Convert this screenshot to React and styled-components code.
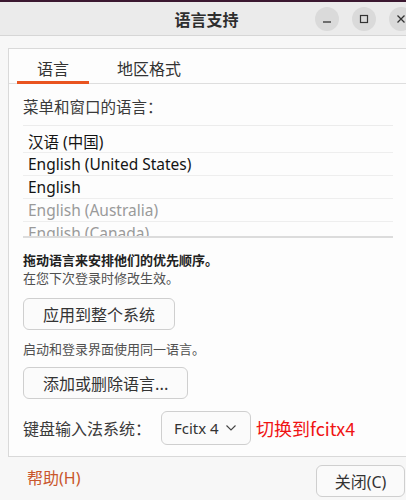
import React from "react";
import styled, { createGlobalStyle } from "styled-components";

const Global = createGlobalStyle`
  html, body { margin: 0; padding: 0; background: #f7f7f7; overflow: hidden; }
  body { font-family: "Noto Sans", "Noto Sans CJK SC", sans-serif; }
  * { box-sizing: border-box; }
`;

const Window = styled.div`
  width: 418px;
  height: 500px;
  display: flex;
  flex-direction: column;
  background: #f7f7f7;
  overflow: hidden;
`;

const TopStrip = styled.div`
  height: 2px;
  background: #3b1830;
`;

const TitleBar = styled.div`
  height: 34px;
  background: #ebebeb;
  border-bottom: 1px solid #d6d6d6;
  display: grid;
  grid-template-columns: 1fr auto 1fr;
  align-items: center;
  padding-right: 5px;
`;

const Title = styled.div`
  grid-column: 2;
  font-family: "Noto Sans CJK SC", sans-serif;
  font-weight: 700;
  font-size: 16px;
  color: #2e2e2e;
  padding-top: 1px;
`;

const Controls = styled.div`
  grid-column: 3;
  justify-self: end;
  display: flex;
  gap: 13px;
`;

const CtrlBtn = styled.div`
  width: 24px;
  height: 24px;
  border-radius: 50%;
  background: #dadada;
  display: flex;
  align-items: center;
  justify-content: center;
  color: #333;
`;

const Main = styled.div`
  padding: 12px 8px 0 8px;
`;

const Frame = styled.div`
  border: 1px solid #d9d9d9;
  background: #fdfdfd;
  height: 409px;
  display: flex;
  flex-direction: column;
`;

const TabBar = styled.div`
  height: 35px;
  border-bottom: 1px solid #dedede;
  display: flex;
  gap: 8px;
  padding-left: 8px;
`;

const Tab = styled.div`
  height: 35px;
  margin-bottom: -1px;
  padding: 5px 20px 0;
  display: flex;
  align-items: center;
  font-family: "Noto Sans CJK SC", sans-serif;
  font-size: 16px;
  color: #333;
  border-bottom: 3px solid ${(p) => (p.$active ? "#e95420" : "transparent")};
`;

const Panel = styled.div`
  padding: 12px 16px 0 14px;
  display: flex;
  flex-direction: column;
`;

const Label = styled.div`
  font-family: "Noto Sans CJK SC", sans-serif;
  font-size: ${(p) => p.$size || 15.5}px;
  line-height: 20px;
  color: #3a3a3a;
  white-space: nowrap;
`;

const List = styled.div`
  margin-top: 9px;
  height: 113px;
  border-top: 1px solid #ececec;
  border-bottom: 2px solid #dcdcdc;
  padding-top: 4px;
  overflow: hidden;
`;

const Row = styled.div`
  height: 23px;
  flex-shrink: 0;
  border-bottom: 1px solid #eeeeee;
  padding-left: 5px;
  display: flex;
  align-items: center;
  font-size: 15.5px;
  color: ${(p) => (p.$dim ? "#9a9a9a" : "#141414")};
  white-space: nowrap;
`;

const Note = styled.div`
  font-family: "Noto Sans CJK SC", sans-serif;
  font-size: 13px;
  line-height: 18px;
  color: ${(p) => (p.$bold ? "#222" : "#505050")};
  font-weight: ${(p) => (p.$bold ? 700 : 400)};
  margin-top: ${(p) => p.$mt || 0}px;
  white-space: nowrap;
`;

const Button = styled.div`
  align-self: flex-start;
  height: 32px;
  margin-top: ${(p) => p.$mt || 0}px;
  padding: 0 19px;
  border: 1px solid #cfcfcf;
  border-radius: 6px;
  background: #fbfbfb;
  display: flex;
  align-items: center;
  font-family: "Noto Sans CJK SC", sans-serif;
  font-size: 16px;
  color: #333;
  white-space: nowrap;
`;

const KbRow = styled.div`
  margin-top: 12px;
  display: flex;
  align-items: center;
`;

const Dropdown = styled.div`
  margin-left: 10px;
  width: 90px;
  height: 34px;
  border: 1px solid #cfcfcf;
  border-radius: 6px;
  background: #fbfbfb;
  display: flex;
  align-items: center;
  padding-left: 12px;
  gap: 7px;
  font-size: 15px;
  color: #333;
`;

const Annot = styled.div`
  margin-left: 5px;
  font-family: "Noto Sans CJK SC", sans-serif;
  font-size: 18px;
  color: #f01414;
  white-space: nowrap;
`;

const Footer = styled.div`
  padding: 8px 13px 0 27px;
  display: flex;
  justify-content: space-between;
  align-items: flex-start;
`;

const Help = styled.div`
  margin-top: 2px;
  line-height: 22px;
  font-family: "Noto Sans", "Noto Sans CJK SC", sans-serif;
  font-size: 16px;
  color: #c9562c;
`;

const CloseBtn = styled(Button)`
  width: 89px;
  justify-content: center;
  padding: 0;
  background: #fafafa;
  font-family: "Noto Sans", "Noto Sans CJK SC", sans-serif;
`;

export default function App() {
  return (
    <>
      <Global />
      <Window>
        <TopStrip />
        <TitleBar>
          <Title>语言支持</Title>
          <Controls>
            <CtrlBtn>
              <svg width="10" height="10" viewBox="0 0 10 10">
                <line x1="1" y1="8" x2="9" y2="8" stroke="#333" strokeWidth="1.3" />
              </svg>
            </CtrlBtn>
            <CtrlBtn>
              <svg width="10" height="10" viewBox="0 0 10 10">
                <rect x="1.5" y="1.5" width="7" height="7" fill="none" stroke="#333" strokeWidth="1.2" />
              </svg>
            </CtrlBtn>
            <CtrlBtn>
              <svg width="10" height="10" viewBox="0 0 10 10">
                <path d="M1.5 1.5 L8.5 8.5 M8.5 1.5 L1.5 8.5" stroke="#333" strokeWidth="1.3" />
              </svg>
            </CtrlBtn>
          </Controls>
        </TitleBar>
        <Main>
          <Frame>
            <TabBar>
              <Tab $active>语言</Tab>
              <Tab>地区格式</Tab>
            </TabBar>
            <Panel>
              <Label>菜单和窗口的语言：</Label>
              <List>
                <Row>汉语 (中国)</Row>
                <Row>English (United States)</Row>
                <Row>English</Row>
                <Row $dim>English (Australia)</Row>
                <Row $dim>English (Canada)</Row>
              </List>
              <Note $bold $mt={13}>拖动语言来安排他们的优先顺序。</Note>
              <Note>在您下次登录时修改生效。</Note>
              <Button $mt={11}>应用到整个系统</Button>
              <Note $mt={10}>启动和登录界面使用同一语言。</Note>
              <Button $mt={9}>添加或删除语言...</Button>
              <KbRow>
                <Label $size={16}>键盘输入法系统：</Label>
                <Dropdown>
                  Fcitx 4
                  <svg width="10" height="6" viewBox="0 0 10 6">
                    <polyline points="0.5,0.5 5,5 9.5,0.5" fill="none" stroke="#444" strokeWidth="1.1" />
                  </svg>
                </Dropdown>
                <Annot>切换到fcitx4</Annot>
              </KbRow>
            </Panel>
          </Frame>
        </Main>
        <Footer>
          <Help>帮助(H)</Help>
          <CloseBtn>关闭(C)</CloseBtn>
        </Footer>
      </Window>
    </>
  );
}
